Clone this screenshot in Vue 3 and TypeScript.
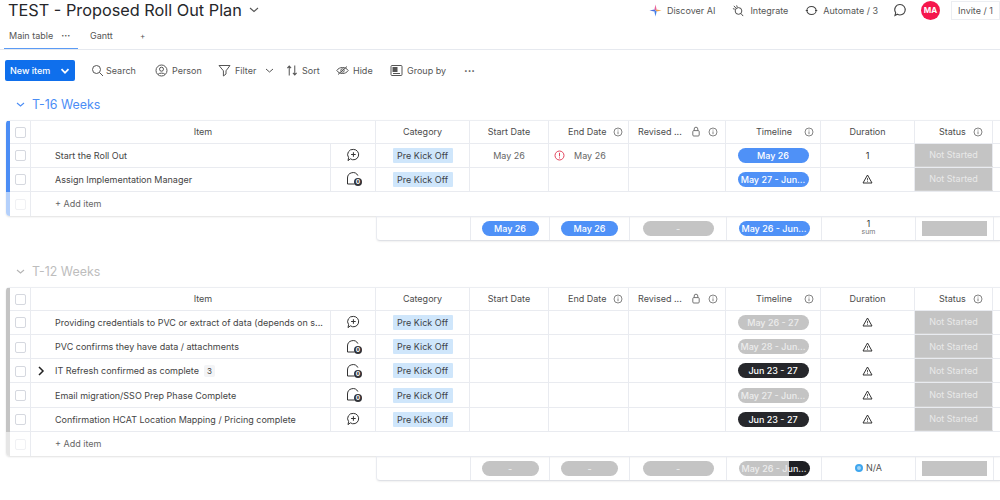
<script setup lang="ts">
type Row = {
  name: string;
  hasUpdate: boolean;
  start?: string;
  end?: string;
  endAlert?: boolean;
  timeline: string;
  timelineKind: 'blue' | 'grey' | 'dark';
  duration?: string;
  subitems?: number;
};

type Pill = { text: string; kind: 'blue' | 'grey' | 'split' };

type Group = {
  title: string;
  color: string;
  light: string;
  titleClass: string;
  rows: Row[];
  summary: { start: Pill; end: Pill; revised: Pill; timeline: Pill };
};

const groups: Group[] = [
  {
    title: 'T-16 Weeks',
    color: '#4b8df5',
    light: '#b4d0fb',
    titleClass: 'blue-title',
    rows: [
      { name: 'Start the Roll Out', hasUpdate: false, start: 'May 26', end: 'May 26', endAlert: true, timeline: 'May 26', timelineKind: 'blue', duration: '1' },
      { name: 'Assign Implementation Manager', hasUpdate: true, timeline: 'May 27 - Jun...', timelineKind: 'blue' },
    ],
    summary: {
      start: { text: 'May 26', kind: 'blue' },
      end: { text: 'May 26', kind: 'blue' },
      revised: { text: '-', kind: 'grey' },
      timeline: { text: 'May 26 - Jun...', kind: 'blue' },
    },
  },
  {
    title: 'T-12 Weeks',
    color: '#c4c4c4',
    light: '#e6e6e6',
    titleClass: 'grey-title',
    rows: [
      { name: 'Providing credentials to PVC or extract of data (depends on s...', hasUpdate: false, timeline: 'May 26 - 27', timelineKind: 'grey' },
      { name: 'PVC confirms they have data / attachments', hasUpdate: true, timeline: 'May 28 - Jun...', timelineKind: 'grey' },
      { name: 'IT Refresh confirmed as complete', hasUpdate: true, timeline: 'Jun 23 - 27', timelineKind: 'dark', subitems: 3 },
      { name: 'Email migration/SSO Prep Phase Complete', hasUpdate: true, timeline: 'May 27 - Jun...', timelineKind: 'grey' },
      { name: 'Confirmation HCAT Location Mapping / Pricing complete', hasUpdate: false, timeline: 'Jun 23 - 27', timelineKind: 'dark' },
    ],
    summary: {
      start: { text: '-', kind: 'grey' },
      end: { text: '-', kind: 'grey' },
      revised: { text: '-', kind: 'grey' },
      timeline: { text: 'May 26 - Jun...', kind: 'split' },
    },
  },
];
</script>

<template>
  <div class="page">
    <header class="top">
      <div class="title">
        <h1>TEST - Proposed Roll Out Plan</h1>
        <svg width="12" height="12" viewBox="0 0 12 12" class="title-caret"><path d="M2 4l4 3.5L10 4" fill="none" stroke="#555" stroke-width="1.1" /></svg>
      </div>
      <div class="top-actions">
        <span class="top-link">
          <svg width="13" height="13" viewBox="0 0 14 14">
            <path d="M7 0.5L8.2 5.8L7 7L5.8 5.8Z" fill="#e8639a" />
            <path d="M13.5 7L8.2 8.2L7 7L8.2 5.8Z" fill="#f0a04b" />
            <path d="M7 13.5L5.8 8.2L7 7L8.2 8.2Z" fill="#3f7fe8" />
            <path d="M0.5 7L5.8 5.8L7 7L5.8 8.2Z" fill="#4a6fe0" />
          </svg>
          Discover AI
        </span>
        <span class="top-link">
          <svg width="13" height="13" viewBox="0 0 14 14" fill="none" stroke="#444" stroke-width="1">
            <circle cx="7" cy="7.5" r="3.6" />
            <path d="M2 2l2.4 2.6M9.6 10.2L12 13M5 1.5l.7 2M1 5l2 .6" />
          </svg>
          Integrate
        </span>
        <span class="top-link">
          <svg width="13" height="13" viewBox="0 0 14 14" fill="none" stroke="#444" stroke-width="1.1">
            <ellipse cx="7" cy="7" rx="5" ry="4.4" />
            <path d="M0.8 7h2.4M10.8 7h2.4" />
          </svg>
          Automate / 3
        </span>
        <svg class="chat" width="14" height="14" viewBox="0 0 14 14" fill="none" stroke="#444" stroke-width="1.1">
          <path d="M7 1.5a5.2 5.2 0 1 1-2.6 9.7L2 12.4l.7-2.7A5.2 5.2 0 0 1 7 1.5z" />
        </svg>
        <span class="avatar">MA</span>
        <span class="invite">Invite / 1</span>
      </div>
    </header>

    <nav class="tabs">
      <span class="tab active">Main table <i class="tab-dots">···</i></span>
      <span class="tab">Gantt</span>
      <span class="tab plus">+</span>
    </nav>

    <div class="toolbar">
      <div class="new-item"><span>New item</span>
        <svg width="10" height="10" viewBox="0 0 10 10"><path d="M1.5 3.2L5 6.8l3.5-3.6" fill="none" stroke="#fff" stroke-width="1.8" /></svg>
      </div>
      <span class="tool search">
        <svg width="13" height="13" viewBox="0 0 13 13" fill="none" stroke="#555" stroke-width="1"><circle cx="5.5" cy="5.5" r="4" /><path d="M8.5 8.5l3.5 3.5" /></svg>
        Search
      </span>
      <span class="tool person">
        <svg width="13" height="13" viewBox="0 0 13 13" fill="none" stroke="#555" stroke-width="1"><circle cx="6.5" cy="6.5" r="5.5" /><circle cx="6.5" cy="5.2" r="2" /><path d="M3 10.4c1-1.7 6-1.7 7 0" /></svg>
        Person
      </span>
      <span class="tool filter">
        <svg width="13" height="13" viewBox="0 0 13 13" fill="none" stroke="#555" stroke-width="1"><path d="M1 1.5h11L8 6.8v3.2L5.4 12V6.8z" /></svg>
        Filter
        <svg class="filter-caret" width="9" height="9" viewBox="0 0 9 9"><path d="M1 3l3.5 3L8 3" fill="none" stroke="#555" stroke-width="1" /></svg>
      </span>
      <span class="tool sort">
        <svg width="12" height="13" viewBox="0 0 13 13" fill="none" stroke="#555" stroke-width="1.1"><path d="M3.5 12V2M1.5 4l2-2.4 2 2.4M9.5 1v10M7.5 9l2 2.4 2-2.4" /></svg>
        Sort
      </span>
      <span class="tool hide">
        <svg width="13" height="13" viewBox="0 0 13 13" fill="none" stroke="#555" stroke-width="1"><path d="M0.8 6.5c2.5-4 8.9-4 11.4 0-2.5 4-8.9 4-11.4 0z" /><circle cx="6.5" cy="6.5" r="1.7" /><path d="M2 10.5l9-8" /></svg>
        Hide
      </span>
      <span class="tool group-by">
        <svg width="13" height="13" viewBox="0 0 13 13" fill="none" stroke="#555" stroke-width="1"><rect x="1" y="1.5" width="11" height="10" rx="1" /><rect x="3" y="3.5" width="4" height="4" fill="#555" /><path d="M3 9.5h7" /></svg>
        Group by
      </span>
      <span class="tool more">···</span>
    </div>

    <section v-for="group in groups" :key="group.title" class="group" :class="group.titleClass">
      <div class="group-head">
        <svg width="11" height="11" viewBox="0 0 11 11"><path d="M2 4l3.5 3L9 4" fill="none" :stroke="group.titleClass === 'blue-title' ? '#4b8df5' : '#b5b5b5'" stroke-width="1.1" /></svg>
        <h2>{{ group.title }}</h2>
      </div>

      <div class="table">
        <div class="row head">
          <div class="cell check" :style="{ borderLeftColor: group.color }"><i class="box"></i></div>
          <div class="cell item-head">Item</div>
          <div class="cell">Category</div>
          <div class="cell">Start Date</div>
          <div class="cell with-info end-head">End Date
            <svg class="info" width="10" height="10" viewBox="0 0 10 10" fill="none" stroke="#666" stroke-width=".8"><circle cx="5" cy="5" r="4" /><path d="M5 4.4v2.8M5 2.6v.9" /></svg>
          </div>
          <div class="cell revised">Revised ...
            <svg class="lock" width="10" height="11" viewBox="0 0 10 11" fill="none" stroke="#666" stroke-width=".9"><rect x="1.8" y="4.6" width="6.4" height="5.4" rx="1" /><path d="M3.2 4.6V3a1.8 1.8 0 0 1 3.6 0v1.6" /></svg>
            <svg class="info" width="10" height="10" viewBox="0 0 10 10" fill="none" stroke="#666" stroke-width=".8"><circle cx="5" cy="5" r="4" /><path d="M5 4.4v2.8M5 2.6v.9" /></svg>
          </div>
          <div class="cell with-info wide-info">Timeline
            <svg class="info" width="10" height="10" viewBox="0 0 10 10" fill="none" stroke="#666" stroke-width=".8"><circle cx="5" cy="5" r="4" /><path d="M5 4.4v2.8M5 2.6v.9" /></svg>
          </div>
          <div class="cell">Duration</div>
          <div class="cell with-info">Status
            <svg class="info" width="10" height="10" viewBox="0 0 10 10" fill="none" stroke="#666" stroke-width=".8"><circle cx="5" cy="5" r="4" /><path d="M5 4.4v2.8M5 2.6v.9" /></svg>
          </div>
          <div class="cell tail"></div>
        </div>

        <div v-for="row in group.rows" :key="row.name" class="row">
          <div class="cell check" :style="{ borderLeftColor: group.color }"><i class="box"></i></div>
          <div class="cell name">
            <svg v-if="row.subitems" class="expand" width="9" height="10" viewBox="0 0 9 10"><path d="M2 1l4 4-4 4" fill="none" stroke="#222" stroke-width="1.5" /></svg>
            <span>{{ row.name }}</span>
            <span v-if="row.subitems" class="sub-count">{{ row.subitems }}</span>
          </div>
          <div class="cell update">
            <svg v-if="!row.hasUpdate" width="14" height="14" viewBox="0 0 14 14" fill="none" stroke="#333" stroke-width="1">
              <path d="M7.4 1.4a5.2 5.2 0 1 1-3 9.4L2 12.6l.6-3A5.2 5.2 0 0 1 7.4 1.4z" />
              <path d="M7.4 4.2v4.6M5.1 6.5h4.6" />
            </svg>
            <svg v-else class="update-badge" width="17" height="16" viewBox="0 0 17 16">
              <path d="M1.5 13V7a5.5 5.5 0 0 1 10.4-2.4M1.5 13h7" fill="none" stroke="#333" stroke-width="1" />
              <circle cx="12" cy="11" r="4" fill="#323338" />
              <text x="12" y="13.4" text-anchor="middle" class="badge-zero">0</text>
            </svg>
          </div>
          <div class="cell"><span class="tag">Pre Kick Off</span></div>
          <div class="cell date">{{ row.start }}</div>
          <div class="cell date end">
            <svg v-if="row.endAlert" class="alert" width="11" height="11" viewBox="0 0 11 11" fill="none" stroke="#e2445c" stroke-width="1"><circle cx="5.5" cy="5.5" r="4.5" /><path d="M5.5 2.8v3.6M5.5 7.4v1" /></svg>
            {{ row.end }}
          </div>
          <div class="cell"></div>
          <div class="cell"><span class="pill" :class="row.timelineKind">{{ row.timeline }}</span></div>
          <div class="cell dur">
            <template v-if="row.duration">{{ row.duration }}</template>
            <svg v-else width="11" height="10" viewBox="0 0 11 10" fill="none" stroke="#333" stroke-width="1"><path d="M5.5 1L10 9H1z" /><path d="M5.5 4v2.4M5.5 7v.8" stroke-width=".8" /></svg>
          </div>
          <div class="cell status">Not Started</div>
          <div class="cell tail"></div>
        </div>

        <div class="row add">
          <div class="cell check" :style="{ borderLeftColor: group.light }"><i class="box faint"></i></div>
          <div class="add-label">+ Add item</div>
        </div>
      </div>

      <div class="row summary">
        <div class="cell"></div>
        <div class="cell"><span class="pill short" :class="group.summary.start.kind">{{ group.summary.start.text }}</span></div>
        <div class="cell"><span class="pill short" :class="group.summary.end.kind">{{ group.summary.end.text }}</span></div>
        <div class="cell"><span class="pill" :class="group.summary.revised.kind">{{ group.summary.revised.text }}</span></div>
        <div class="cell">
          <span class="pill" :class="group.summary.timeline.kind">{{ group.summary.timeline.text }}</span>
        </div>
        <div class="cell dur-sum">
          <template v-if="group.titleClass === 'blue-title'">
            <b>1</b><small>sum</small>
          </template>
          <span v-else class="na"><i class="na-dot"></i>N/A</span>
        </div>
        <div class="cell"><span class="status-sum"></span></div>
        <div class="cell tail"></div>
      </div>
    </section>
  </div>
</template>

<style scoped>
.page {
  width: 1000px;
  height: 500px;
  overflow: hidden;
  background: #fff;
  color: #444;
  font-family: "Inter", "Liberation Sans", sans-serif;
  font-size: 9px;
}

.top {
  display: flex;
  justify-content: space-between;
  align-items: flex-start;
  height: 24px;
  padding-left: 8px;
}

.title {
  display: flex;
  align-items: center;
  gap: 6px;
  height: 20px;
}

h1 {
  margin: 0;
  font-size: 16.3px;
  font-weight: 400;
  color: #26272b;
  white-space: nowrap;
}

.title-caret {
  margin-top: -1px;
}

.top-actions {
  display: flex;
  align-items: center;
  height: 20px;
}

.top-link {
  display: flex;
  align-items: center;
  gap: 5px;
  margin-right: 17px;
  color: #555;
  white-space: nowrap;
}

.chat {
  margin-left: -2px;
  margin-right: 14px;
}

.avatar {
  width: 19px;
  height: 19px;
  border-radius: 50%;
  background: #f5174d;
  color: #fff;
  font-size: 8px;
  font-weight: 700;
  display: flex;
  align-items: center;
  justify-content: center;
  margin-right: 11px;
}

.invite {
  height: 19px;
  width: 49px;
  display: flex;
  align-items: center;
  justify-content: center;
  border: 1px solid #eceef2;
  box-sizing: border-box;
  color: #555;
  white-space: nowrap;
}

.tabs {
  display: flex;
  height: 24.5px;
  border-bottom: 1px solid #e6e9ef;
  align-items: stretch;
  padding-left: 4px;
}

.tab {
  display: flex;
  align-items: center;
  padding-bottom: 1px;
  color: #555;
  white-space: nowrap;
}

.tab.active {
  width: 74px;
  padding-left: 5px;
  box-sizing: border-box;
  border-bottom: 1px solid #5b9bf5;
}

.tab-dots {
  font-style: normal;
  margin-left: 8px;
  font-weight: 700;
}

.tab:nth-child(2) {
  margin-left: 12px;
  width: 50px;
}

.tab.plus {
  font-size: 8px;
}

.toolbar {
  display: flex;
  align-items: center;
  height: 21px;
  margin-top: 10.5px;
  padding-left: 5px;
  color: #555;
}

.new-item {
  width: 70px;
  height: 21px;
  box-sizing: border-box;
  background: #0f6fec;
  color: #fff;
  border-radius: 2px;
  display: flex;
  align-items: center;
  justify-content: space-between;
  padding: 0 5px;
  font-size: 9px;
  font-weight: 500;
  white-space: nowrap;
}

.tool {
  display: flex;
  align-items: center;
  gap: 4px;
  white-space: nowrap;
}

.search { margin-left: 16px; width: 64px; gap: 2px; }
.person { width: 63px; }
.filter { width: 68px; }
.sort { width: 50px; }
.hide { width: 54px; }
.group-by { width: 74px; }
.more { font-weight: 700; font-size: 11px; }

.filter-caret {
  margin-left: 5px;
}

.group {
  padding-left: 6px;
}

.group-head {
  display: flex;
  align-items: center;
  gap: 6px;
  height: 20px;
  padding-left: 9px;
  margin-top: 13.5px;
  margin-bottom: 5px;
}

.group + .group .group-head {
  margin-top: 21px;
  margin-bottom: 5px;
}

h2 {
  margin: 0;
  font-size: 12.4px;
  font-weight: 400;
}

.blue-title h2 { color: #4b8df5; }
.grey-title h2 { color: #bdbdbd; }

.table {
  width: 994px;
  box-shadow: 0 1px 2px rgba(0, 0, 0, 0.12);
  border-radius: 4px 0 0 4px;
  overflow: hidden;
}

.row {
  display: grid;
  grid-template-columns: 25px 300px 45px 94px 79px 80px 97px 95px 94px 78px 1fr;
  height: 24.3px;
  border-bottom: 1px solid #e9ebf0;
  box-sizing: border-box;
}

.row.head {
  grid-template-columns: 25px 345px 94px 79px 80px 97px 95px 94px 78px 1fr;
  border-top: 1px solid #eceef2;
  height: 24px;
}

.cell {
  display: flex;
  align-items: center;
  justify-content: center;
  min-width: 0;
  border-right: 1px solid #e9ebf0;
  box-sizing: border-box;
  white-space: nowrap;
  color: #555;
}

.cell.tail {
  border-right: none;
}

.check {
  border-left: 4px solid;
  border-right: 1px solid #e9ebf0;
  margin-bottom: -1px;
}

.box {
  width: 9px;
  height: 9px;
  border: 1px solid #d5d8df;
  border-radius: 2px;
}

.box.faint {
  border-color: #f0f1f4;
}

.head .cell {
  color: #4c4c4c;
}

.with-info {
  justify-content: flex-start;
  padding-left: 24px;
  gap: 7px;
}

.end-head {
  padding-left: 19px;
}

.wide-info {
  padding-left: 30px;
  gap: 12px;
}

.revised {
  justify-content: flex-start;
  padding-left: 9px;
  gap: 0;
}

.lock {
  margin-left: 9px;
}

.revised .info {
  margin-left: 7px;
}

.name {
  justify-content: flex-start;
  padding-left: 24px;
  position: relative;
  color: #444;
}

.expand {
  position: absolute;
  left: 6px;
  top: 7px;
}

.sub-count {
  margin-left: 5px;
  background: #f3f4f6;
  padding: 1px 3px;
  font-size: 8px;
  border-radius: 2px;
}

.update-badge {
  margin-left: 2px;
}

.badge-zero {
  font: 700 6.5px "Inter", sans-serif;
  fill: #fff;
}

.tag {
  background: #cfe6fb;
  color: #3c3f48;
  width: 60px;
  height: 15px;
  display: flex;
  align-items: center;
  justify-content: center;
  border-radius: 1px;
}

.date {
  color: #666;
}

.end {
  justify-content: flex-start;
  padding-left: 25px;
  position: relative;
}

.alert {
  position: absolute;
  left: 5px;
  top: 6px;
}

.pill {
  width: 71px;
  height: 15px;
  border-radius: 8px;
  display: flex;
  align-items: center;
  justify-content: center;
  color: #fff;
  font-weight: 500;
  overflow: hidden;
}

.pill.short {
  width: 57px;
}

.pill.blue { background: #4f91f7; }
.pill.grey { background: #c4c4c4; color: #ececec; }
.pill.dark { background: #26272b; }
.pill.split {
  background: linear-gradient(to right, #c4c4c4 0 70%, #1f2024 70% 100%);
  color: #eee;
}

.dur {
  color: #333;
}

.cell.status {
  background: #c4c4c4;
  color: #e9e9e9;
  border-right: 1px solid #e9ebf0;
  border-bottom: 1px solid #cfcfcf;
}

.row.add {
  display: flex;
  height: 24px;
  border-bottom: none;
}

.row.add .check {
  width: 25px;
  flex: none;
  margin-bottom: 0;
}

.add-label {
  display: flex;
  align-items: center;
  padding-left: 24px;
  padding-bottom: 1px;
  color: #666;
}

.row.summary {
  grid-template-columns: 94px 79px 80px 97px 95px 94px 78px 1fr;
  margin-left: 370px;
  width: 624px;
  border-top: 1px solid #e9ebf0;
  border-bottom: 1px solid #dfe1e6;
  border-left: 1px solid #e9ebf0;
  border-radius: 0 0 0 4px;
  height: 24.5px;
  box-shadow: 0 1px 2px rgba(0, 0, 0, 0.06);
}

.dur-sum {
  flex-direction: column;
  color: #333;
  line-height: 8px;
}

.dur-sum b {
  font-weight: 400;
  font-size: 8.5px;
}

.dur-sum small {
  font-size: 7px;
  color: #777;
}

.na {
  display: flex;
  align-items: center;
  gap: 3px;
  color: #555;
}

.na-dot {
  width: 4px;
  height: 4px;
  border-radius: 50%;
  border: 2px solid #3fa6ee;
  background: #9fd4f7;
}

.status-sum {
  width: 65px;
  height: 15px;
  background: #c4c4c4;
}
</style>
